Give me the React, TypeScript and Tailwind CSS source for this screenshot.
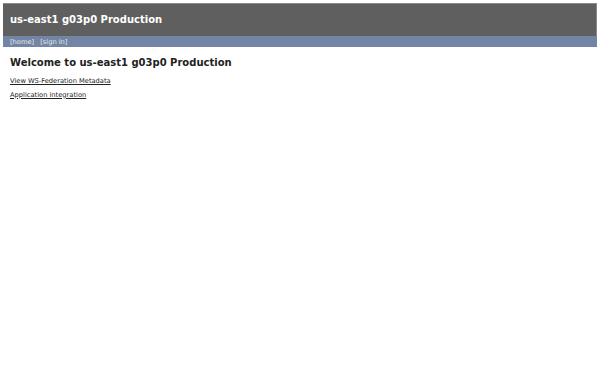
export default function App() {
  return (
    <div className="min-h-[375px] w-[600px] bg-white" style={{ fontFamily: '"DejaVu Sans", sans-serif' }}>
      <div className="px-[3px] pt-[3px]">
        <div className="border-t border-r border-[#8a8a8a] bg-[#5f5f5f] h-[33px] flex items-center px-[7px]">
          <span className="text-white font-bold text-[10px] leading-none">us-east1 g03p0 Production</span>
        </div>
        <div className="bg-[#7385a5] h-[11px] flex items-center pt-[1px] px-[7px] gap-[6px] text-[6.7px] leading-none text-[#e8e8f0]">
          <span>[home]</span>
          <span>[sign in]</span>
        </div>
      </div>
      <div className="px-[10px] pt-[11px]">
        <h1 className="font-bold text-[10px] leading-none text-[#222]">Welcome to us-east1 g03p0 Production</h1>
        <div className="mt-[10px] text-[6.7px] leading-none text-[#222] underline">View WS-Federation Metadata</div>
        <div className="mt-[7px] text-[6.7px] leading-none text-[#222] underline">Application integration</div>
      </div>
    </div>
  );
}
